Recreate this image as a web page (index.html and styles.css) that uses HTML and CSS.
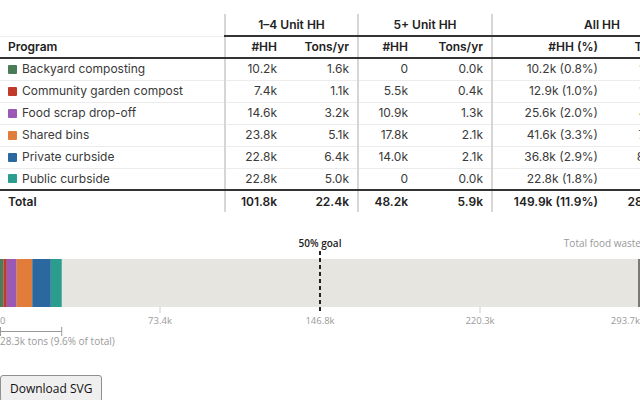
FILE: index.html
```html
<!DOCTYPE html>
<html>
<head>
<meta charset="utf-8">
<link rel="stylesheet" href="styles.css">
</head>
<body>
<div class="page">
  <div class="table-wrap">
    <table class="prog">
      <colgroup>
        <col class="c-prog"><col class="c-a1"><col class="c-a2"><col class="c-b1"><col class="c-b2"><col class="c-c1"><col class="c-c2">
      </colgroup>
      <thead>
        <tr class="groups">
          <th class="blank"></th>
          <th colspan="2" class="grp sep">1–4 Unit HH</th>
          <th colspan="2" class="grp sep">5+ Unit HH</th>
          <th colspan="2" class="grp sep">All HH</th>
        </tr>
        <tr class="cols">
          <th class="left">Program</th>
          <th class="sep">#HH</th><th>Tons/yr</th>
          <th class="sep">#HH</th><th>Tons/yr</th>
          <th class="sep">#HH (%)</th><th>Tons/yr (%)</th>
        </tr>
      </thead>
      <tbody>
        <tr><td class="left"><span class="sw green"></span>Backyard composting</td><td class="sep">10.2k</td><td>1.6k</td><td class="sep">0</td><td>0.0k</td><td class="sep">10.2k (0.8%)</td><td>1.6k (0.5%)</td></tr>
        <tr><td class="left"><span class="sw red"></span>Community garden compost</td><td class="sep">7.4k</td><td>1.1k</td><td class="sep">5.5k</td><td>0.4k</td><td class="sep">12.9k (1.0%)</td><td>1.5k (0.5%)</td></tr>
        <tr><td class="left"><span class="sw purple"></span>Food scrap drop-off</td><td class="sep">14.6k</td><td>3.2k</td><td class="sep">10.9k</td><td>1.3k</td><td class="sep">25.6k (2.0%)</td><td>4.5k (1.5%)</td></tr>
        <tr><td class="left"><span class="sw orange"></span>Shared bins</td><td class="sep">23.8k</td><td>5.1k</td><td class="sep">17.8k</td><td>2.1k</td><td class="sep">41.6k (3.3%)</td><td>7.2k (2.5%)</td></tr>
        <tr><td class="left"><span class="sw blue"></span>Private curbside</td><td class="sep">22.8k</td><td>6.4k</td><td class="sep">14.0k</td><td>2.1k</td><td class="sep">36.8k (2.9%)</td><td>8.5k (2.9%)</td></tr>
        <tr><td class="left"><span class="sw teal"></span>Public curbside</td><td class="sep">22.8k</td><td>5.0k</td><td class="sep">0</td><td>0.0k</td><td class="sep">22.8k (1.8%)</td><td>5.0k (1.7%)</td></tr>
      </tbody>
      <tfoot>
        <tr><td class="left">Total</td><td class="sep">101.8k</td><td>22.4k</td><td class="sep">48.2k</td><td>5.9k</td><td class="sep">149.9k (11.9%)</td><td>28.3k (9.6%)</td></tr>
      </tfoot>
    </table>
  </div>

  <svg class="chart" width="640" height="118" viewBox="0 0 640 118">
    <rect x="0" y="27" width="700" height="48" fill="#e6e5e0"/>
    <rect x="0" y="27" width="3.5" height="48" fill="#4a7d57"/>
    <rect x="3.5" y="27" width="3.3" height="48" fill="#c0392b"/>
    <rect x="6.8" y="27" width="9.8" height="48" fill="#9b59b6"/>
    <rect x="16.6" y="27" width="15.7" height="48" fill="#e27c3a"/>
    <rect x="32.3" y="27" width="18.5" height="48" fill="#2c68a0"/>
    <rect x="50.8" y="27" width="10.9" height="48" fill="#2a9d8f"/>
    <line x1="639" y1="27" x2="639" y2="75" stroke="#555" stroke-width="1.5"/>
    <g stroke="#ccc" stroke-width="1">
      <line x1="160" y1="75" x2="160" y2="81"/>
      <line x1="480" y1="75" x2="480" y2="81"/>
    </g>
    <line x1="320" y1="19" x2="320" y2="81" stroke="#222" stroke-width="2" stroke-dasharray="4 3"/>
    <text class="goal" x="320" y="15" text-anchor="middle">50% goal</text>
    <text class="total-lbl" x="641" y="15" text-anchor="end">Total food waste</text>
    <g class="tick">
      <text x="0" y="92">0</text>
      <text x="160" y="92" text-anchor="middle">73.4k</text>
      <text x="320" y="92" text-anchor="middle">146.8k</text>
      <text x="480" y="92" text-anchor="middle">220.3k</text>
      <text x="640" y="92" text-anchor="end">293.7k</text>
    </g>
    <g stroke="#999" stroke-width="1">
      <line x1="0.5" y1="99.5" x2="61.7" y2="99.5"/>
      <line x1="0.5" y1="95" x2="0.5" y2="104"/>
      <line x1="61.7" y1="95" x2="61.7" y2="104"/>
    </g>
    <text class="note" x="0" y="113">28.3k tons (9.6% of total)</text>
  </svg>

  <div class="actions">
    <button class="dl">Download SVG</button>
  </div>
</div>
</body>
</html>
```

FILE: styles.css
```css
html, body {
  margin: 0;
  padding: 0;
  background: #fff;
}
.page {
  width: 640px;
  overflow: hidden;
  padding-top: 14px;
}
.table-wrap {
  width: 640px;
  overflow: hidden;
}
.prog {
  table-layout: fixed;
  border-collapse: collapse;
  width: 711px;
  font-family: "Inter", "Liberation Sans", sans-serif;
  font-size: 12px;
  color: #3a3a3a;
}
.c-prog { width: 225px; }
.c-a1 { width: 60px; }
.c-a2 { width: 73px; }
.c-b1 { width: 58px; }
.c-b2 { width: 76px; }
.c-c1 { width: 114px; }
.c-c2 { width: 105px; }
.prog th, .prog td {
  height: 22px;
  padding: 0 8px;
  text-align: right;
  white-space: nowrap;
  box-sizing: border-box;
  line-height: 20px;
}
.prog th {
  font-weight: 600;
  color: #222;
}
.prog .left { text-align: left; }
.prog .sep { border-left: 2px solid #d6d6d6; }
.groups th.grp {
  text-align: center;
  border-bottom: 2px solid #333;
}
.groups th.blank { border-bottom: 1px solid #eee; }
.cols th { border-bottom: 2px solid #333; }
tbody td { border-bottom: 1px solid #ececec; }
tbody tr:last-child td { border-bottom: 2px solid #333; }
tfoot td {
  font-weight: 600;
  color: #222;
}
.sw {
  display: inline-block;
  width: 9px;
  height: 9px;
  border-radius: 1px;
  margin-right: 5px;
  vertical-align: -0.5px;
}
.green { background: #4a7d57; }
.red { background: #c0392b; }
.purple { background: #9b59b6; }
.orange { background: #e27c3a; }
.blue { background: #2c68a0; }
.teal { background: #2a9d8f; }

.chart {
  display: block;
  margin-top: 20px;
  font-family: "Open Sans", "Noto Sans", sans-serif;
}
.chart .goal {
  font-size: 10px;
  font-weight: 600;
  fill: #222;
}
.chart .total-lbl {
  font-size: 10px;
  fill: #999;
}
.chart .tick, .chart .tick text {
  font-size: 9.5px;
  fill: #9a9a9a;
}
.chart .note {
  font-size: 10px;
  fill: #9a9a9a;
}
.actions {
  margin-top: 25px;
}
.dl {
  font-family: "Open Sans", "Noto Sans", sans-serif;
  font-size: 12px;
  color: #111;
  background: #efefef;
  border: 1px solid #8f8f8f;
  border-radius: 3px;
  padding: 4px 9px;
  margin: 0;
}
```
